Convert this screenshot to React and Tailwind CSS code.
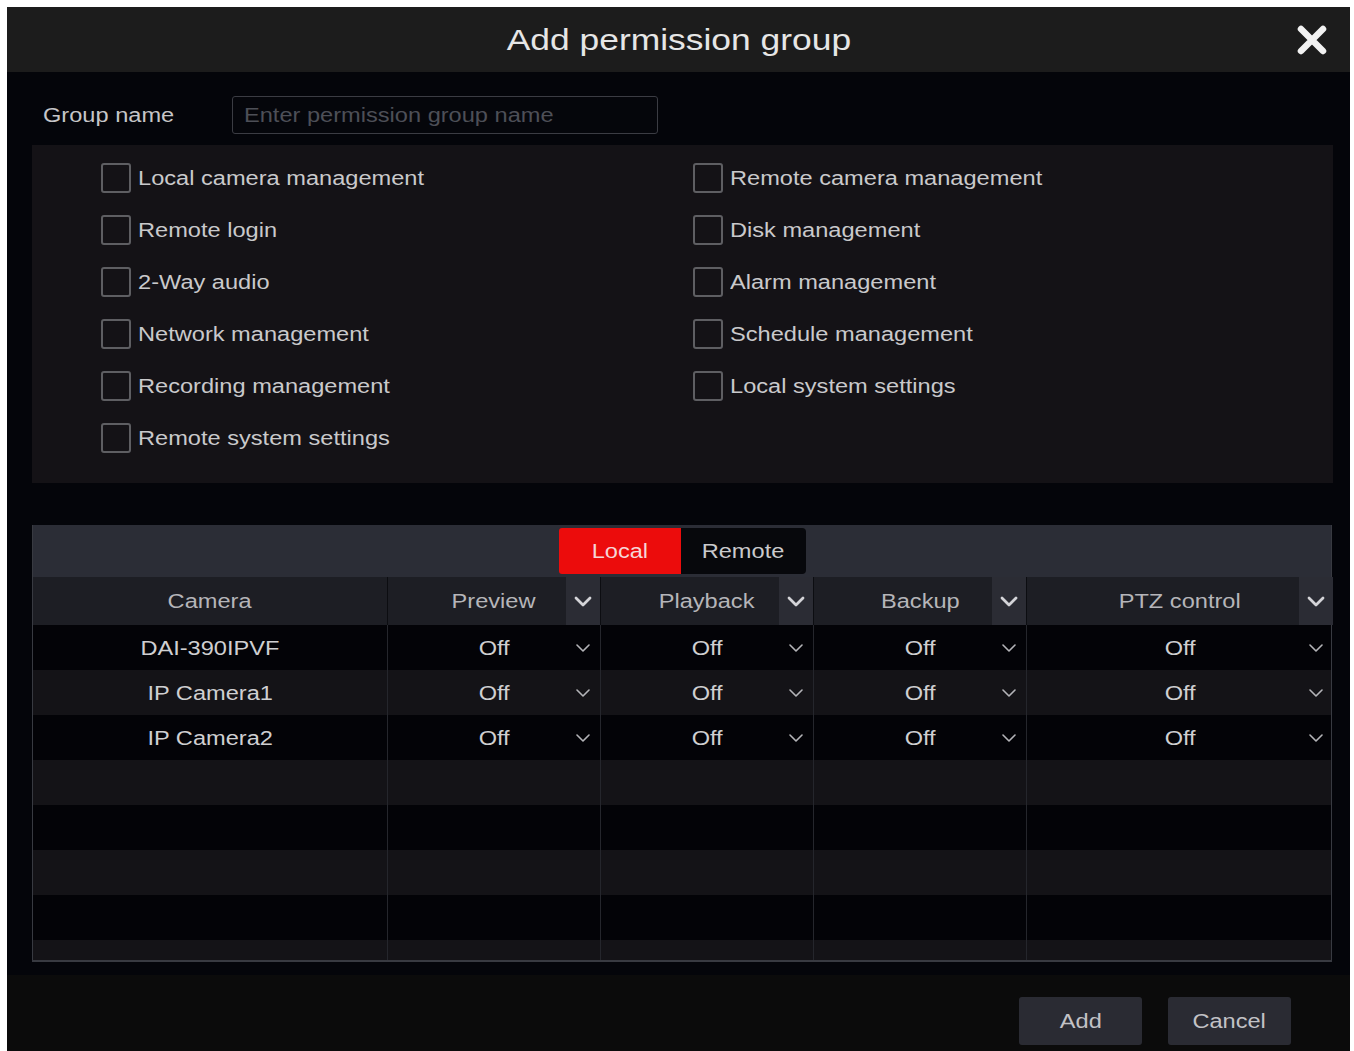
import React from "react";

// Text in this NVR-style UI is drawn wide; a horizontal stretch keeps Arial metrics.
function W({ children, left = false }) {
  return (
    <span
      className={
        left
          ? "inline-block origin-left scale-x-[1.18] whitespace-nowrap"
          : "inline-block scale-x-[1.18] whitespace-nowrap"
      }
    >
      {children}
    </span>
  );
}

function CloseIcon() {
  return (
    <svg width="32" height="32" viewBox="0 0 32 32">
      <path
        d="M5 5 L27 27 M27 5 L5 27"
        stroke="#f2f2f2"
        strokeWidth="6.5"
        strokeLinecap="round"
      />
    </svg>
  );
}

function HeadChevron() {
  return (
    <svg width="18" height="11" viewBox="0 0 18 11">
      <path
        d="M2 2 L9 9 L16 2"
        fill="none"
        stroke="#d4d4d8"
        strokeWidth="2.8"
        strokeLinecap="round"
        strokeLinejoin="round"
      />
    </svg>
  );
}

function RowChevron() {
  return (
    <svg width="14" height="8" viewBox="0 0 14 8">
      <path
        d="M1 1 L7 7 L13 1"
        fill="none"
        stroke="#b4b4b8"
        strokeWidth="1.6"
        strokeLinecap="round"
        strokeLinejoin="round"
      />
    </svg>
  );
}

function Check({ label }) {
  return (
    <div className="flex h-[52px] items-center gap-[7px]">
      <span className="h-[30px] w-[30px] shrink-0 rounded-[3px] border-2 border-[#5e5e62]" />
      <span className="text-[20px] text-[#c9c9cb]">
        <W left>{label}</W>
      </span>
    </div>
  );
}

const leftPerms = [
  "Local camera management",
  "Remote login",
  "2-Way audio",
  "Network management",
  "Recording management",
  "Remote system settings",
];

const rightPerms = [
  "Remote camera management",
  "Disk management",
  "Alarm management",
  "Schedule management",
  "Local system settings",
];

const cameras = ["DAI-390IPVF", "IP Camera1", "IP Camera2"];
const rightCols = ["Preview", "Playback", "Backup", "PTZ control"];
const gridCols = "grid grid-cols-[354px_213px_213px_213px_307px]";

function HeaderCell({ title }) {
  return (
    <div className="relative flex h-full items-center justify-center border-l border-[#0c0d11] bg-[#1d1e24] text-[20px] text-[#b5b5b9]">
      <W>{title}</W>
      <div className="absolute right-0 top-0 flex h-full w-[34px] items-center justify-center bg-[#2b2c34]">
        <HeadChevron />
      </div>
    </div>
  );
}

function OffCell() {
  return (
    <div className="relative flex h-full items-center justify-center border-l border-[#25262c] text-[20px] text-[#cfcfd1]">
      <W>Off</W>
      <div className="absolute right-[10px] top-0 flex h-full items-center">
        <RowChevron />
      </div>
    </div>
  );
}

export default function App() {
  const rows = Array.from({ length: 8 }, (_, i) => cameras[i] ?? null);

  return (
    <div
      className="min-h-screen bg-white"
      style={{ fontFamily: '"Liberation Sans", Arial, sans-serif' }}
    >
      <div className="ml-[7px] flex h-[1051px] w-[1343px] flex-col overflow-hidden pt-[7px]">
        <div className="flex flex-1 flex-col bg-[#04050a]">
          {/* Title bar */}
          <header className="relative flex h-[65px] shrink-0 items-center justify-center bg-[#1c1c1c]">
            <h1 className="text-[30px] text-[#e6e6e6]">
              <W>Add permission group</W>
            </h1>
            <button className="absolute right-[22px] top-[17px]">
              <CloseIcon />
            </button>
          </header>

          {/* Group name */}
          <div className="mt-[24px] flex h-[38px] items-center">
            <label className="w-[225px] pl-[36px] text-[20px] text-[#c6c6c8]">
              <W left>Group name</W>
            </label>
            <div className="flex h-[38px] w-[426px] items-center rounded-[3px] border border-[#3b3c43] bg-[#05060b] pl-[11px] text-[20px] text-[#4d4f57]">
              <W left>Enter permission group name</W>
            </div>
          </div>

          {/* Permissions */}
          <div className="ml-[25px] mt-[11px] flex h-[338px] w-[1301px] bg-[#141216] pl-[69px] pt-[7px]">
            <div className="flex w-[592px] flex-col">
              {leftPerms.map((p) => (
                <Check key={p} label={p} />
              ))}
            </div>
            <div className="flex flex-col">
              {rightPerms.map((p) => (
                <Check key={p} label={p} />
              ))}
            </div>
          </div>

          {/* Camera rights table */}
          <div className="ml-[25px] mt-[42px] w-[1300px] border-x border-b-2 border-[#383a41]">
            <div className="flex h-[52px] items-center justify-center bg-[#2b2d36]">
              <div className="flex h-[46px] w-[122px] items-center justify-center rounded-l-[3px] bg-[#ec0c0c] text-[20px] text-[#f6d6d6]">
                <W>Local</W>
              </div>
              <div className="flex h-[46px] w-[125px] items-center justify-center rounded-r-[4px] bg-[#07080c] text-[20px] text-[#cacacc]">
                <W>Remote</W>
              </div>
            </div>

            <div className={`${gridCols} h-[48px]`}>
              <div className="flex h-full items-center justify-center bg-[#1d1e24] text-[20px] text-[#b5b5b9]">
                <W>Camera</W>
              </div>
              {rightCols.map((c) => (
                <HeaderCell key={c} title={c} />
              ))}
            </div>

            <div className="h-[335px] overflow-hidden">
              {rows.map((name, i) => (
                <div
                  key={i}
                  className={`${gridCols} h-[45px] ${
                    i % 2 === 0 ? "bg-[#030307]" : "bg-[#141317]"
                  }`}
                >
                  <div className="flex h-full items-center justify-center text-[20px] text-[#cfcfd1]">
                    {name && <W>{name}</W>}
                  </div>
                  {name
                    ? rightCols.map((c) => <OffCell key={c} />)
                    : rightCols.map((c) => (
                        <div key={c} className="h-full border-l border-[#25262c]" />
                      ))}
                </div>
              ))}
            </div>
          </div>

          {/* Footer buttons */}
          <div className="mt-[13px] flex flex-1 items-start justify-end gap-[26px] bg-[#0b0b0b] pr-[59px] pt-[22px]">
            <button className="flex h-[48px] w-[123px] items-center justify-center rounded-[3px] bg-[#2a2b33] text-[20px] text-[#c2c2c6]">
              <W>Add</W>
            </button>
            <button className="flex h-[48px] w-[123px] items-center justify-center rounded-[3px] bg-[#2a2b33] text-[20px] text-[#c2c2c6]">
              <W>Cancel</W>
            </button>
          </div>
        </div>
      </div>
    </div>
  );
}
